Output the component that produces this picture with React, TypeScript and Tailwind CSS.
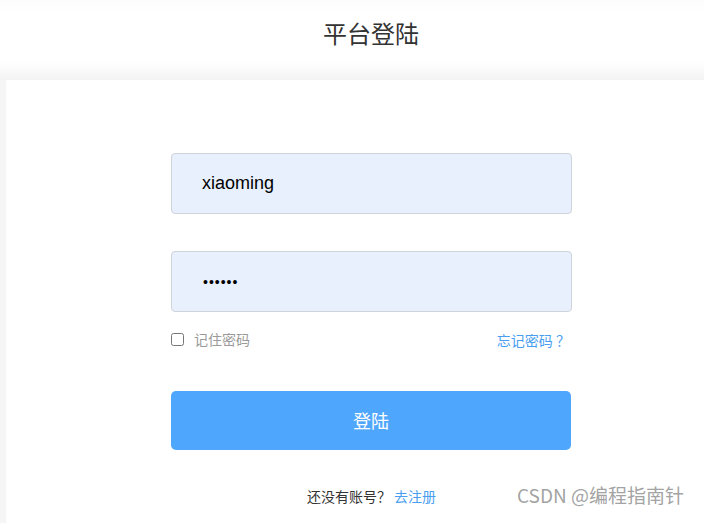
import { useState } from 'react';

const FONT = "font-['Liberation_Sans','Noto_Sans_CJK_SC',sans-serif]";

export default function App() {
  const [username, setUsername] = useState('xiaoming');
  const [password, setPassword] = useState('123456');
  const [remember, setRemember] = useState(false);

  return (
    <div className={`relative min-h-[523px] bg-[#f6f6f6] ${FONT}`}>
      {/* Header */}
      <header className="h-[80px] pb-[12px] bg-[linear-gradient(to_bottom,#fcfcfc_0px,#ffffff_12px,#ffffff_62px,#f3f3f3_80px)] flex items-center justify-center">
        <h1 className="ml-[38px] text-[24px] leading-none text-[#333] font-['Noto_Sans_CJK_SC',sans-serif] -mt-[2px]">平台登陆</h1>
      </header>

      {/* Login card */}
      <main className="ml-[6px] bg-white min-h-[443px] pt-[73px]">
        <form className="ml-[165px] w-[401px] flex flex-col" onSubmit={(e) => e.preventDefault()}>
          <input
            value={username}
            onChange={(e) => setUsername(e.target.value)}
            className="h-[61px] rounded-[4px] border border-[#cfd3da] bg-[#e8f0fe] pl-[30px] text-[18px] text-black outline-none font-['Liberation_Sans',sans-serif]"
          />
          <input
            type="password"
            value={password}
            onChange={(e) => setPassword(e.target.value)}
            className="mt-[37px] h-[61px] rounded-[4px] border border-[#cfd3da] bg-[#e8f0fe] pl-[31px] text-[14px] tracking-[1px] text-black outline-none font-['Liberation_Sans',sans-serif]"
          />

          <div className="mt-[17px] h-[20px] flex items-center justify-between">
            <label className="flex items-center gap-[10px] text-[14px] text-[#9a9a9a]">
              <input
                type="checkbox"
                checked={remember}
                onChange={(e) => setRemember(e.target.checked)}
                className="m-0 w-[13px] h-[13px]"
              />
              <span className="font-['Noto_Sans_CJK_SC',sans-serif]">记住密码</span>
            </label>
            <a href="#" className="text-[14px] text-[#4a9ef0] mr-[2px] mt-[3px] font-['Noto_Sans_CJK_SC',sans-serif]">忘记密码 ？</a>
          </div>

          <button
            type="submit"
            className="mt-[42px] h-[59px] w-[400px] rounded-[5px] bg-[#4fa6fd] text-white text-[18px] font-['Noto_Sans_CJK_SC',sans-serif]"
          >
            登陆
          </button>

          <p className="mt-[36px] text-center text-[14px] leading-[20px] text-[#333] font-['Noto_Sans_CJK_SC',sans-serif]">
            还没有账号？ <a href="#" className="text-[#4a9ef0]">去注册</a>
          </p>
        </form>
      </main>

      {/* Watermark */}
      <div className="absolute left-[517px] top-[482px] text-[19px] leading-[26px] text-[#8a8a8a]/80 font-['Noto_Sans_CJK_SC',sans-serif] pointer-events-none">
        CSDN @编程指南针
      </div>
    </div>
  );
}
